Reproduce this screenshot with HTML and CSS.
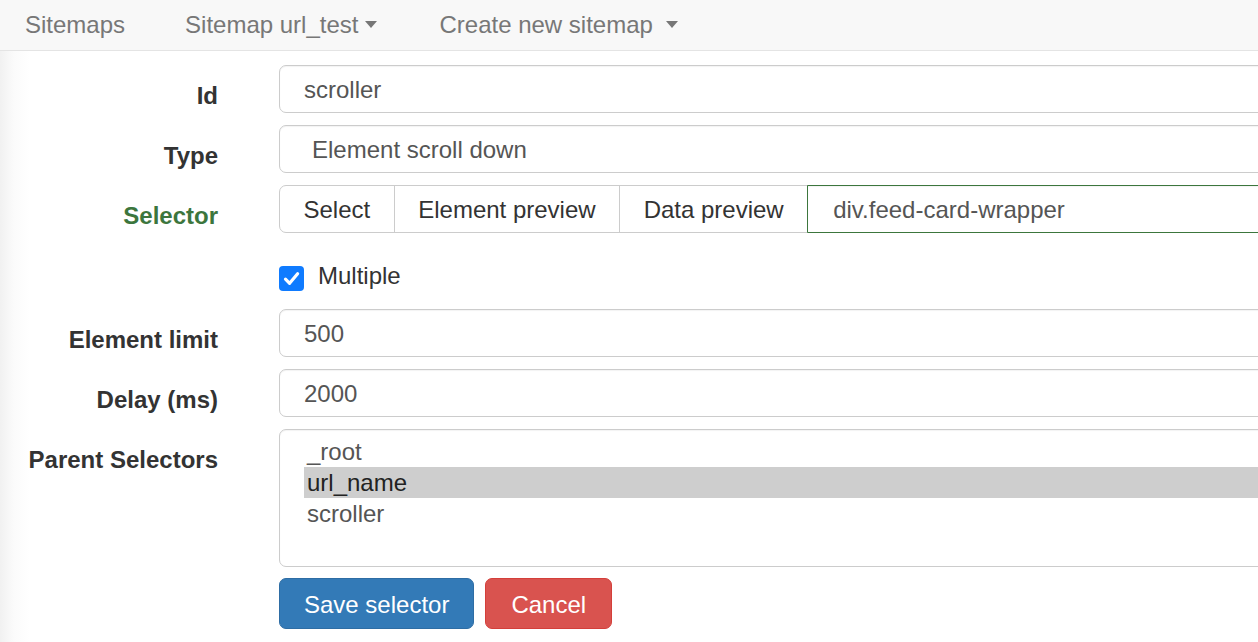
FILE: index.html
```html
<!DOCTYPE html>
<html>
<head>
<meta charset="utf-8">
<title>Edit selector</title>
<link rel="stylesheet" href="styles.css">
</head>
<body>
<nav class="navbar">
  <ul class="nav">
    <li class="nav-item">Sitemaps</li>
    <li class="nav-item">Sitemap url_test<span class="caret caret-tight"></span></li>
    <li class="nav-item nav-item-last">Create new sitemap<span class="caret caret-wide"></span></li>
  </ul>
</nav>
<main class="page">
  <form class="form">
    <div class="form-row">
      <label class="control-label">Id</label>
      <div class="control"><div class="form-control">scroller</div></div>
    </div>
    <div class="form-row">
      <label class="control-label">Type</label>
      <div class="control"><div class="form-control select-control">Element scroll down</div></div>
    </div>
    <div class="form-row">
      <label class="control-label label-success">Selector</label>
      <div class="control input-group">
        <span class="btn btn-default btn-first">Select</span>
        <span class="btn btn-default">Element preview</span>
        <span class="btn btn-default">Data preview</span>
        <div class="form-control group-input success">div.feed-card-wrapper</div>
      </div>
    </div>
    <div class="form-row checkbox-row">
      <span class="control-label"></span>
      <div class="control checkbox">
        <span class="check-box"><svg width="25" height="25" viewBox="0 0 25 25"><rect x="0" y="0" width="25" height="25" rx="4" fill="#0f7bff"/><path d="M6.5 13.2 L10.6 17.3 L18.6 7.8" fill="none" stroke="#fff" stroke-width="3.2" stroke-linecap="round" stroke-linejoin="round"/></svg></span>
        <span class="check-text">Multiple</span>
      </div>
    </div>
    <div class="form-row">
      <label class="control-label">Element limit</label>
      <div class="control"><div class="form-control">500</div></div>
    </div>
    <div class="form-row">
      <label class="control-label">Delay (ms)</label>
      <div class="control"><div class="form-control">2000</div></div>
    </div>
    <div class="form-row">
      <label class="control-label">Parent Selectors</label>
      <div class="control">
        <div class="listbox">
          <div class="option">_root</div>
          <div class="option selected">url_name</div>
          <div class="option">scroller</div>
        </div>
      </div>
    </div>
    <div class="form-row actions">
      <span class="control-label"></span>
      <div class="control buttons">
        <span class="btn btn-primary">Save selector</span>
        <span class="btn btn-danger">Cancel</span>
      </div>
    </div>
  </form>
</main>
</body>
</html>
```

FILE: styles.css
```css
html, body {
  margin: 0;
  padding: 0;
  overflow: hidden;
  background: #fff;
}
body {
  font-family: "Liberation Sans", Arial, Helvetica, sans-serif;
  font-size: 24px;
  line-height: 1.42857;
  color: #333;
  width: 1258px;
  height: 642px;
}
.navbar {
  height: 50px;
  background: #f8f8f8;
  border-bottom: 1px solid #e4e4e4;
}
.nav {
  list-style: none;
  margin: 0;
  padding: 0 0 0 25px;
  display: flex;
  gap: 60px;
}
.nav-item {
  line-height: 50px;
  color: #777;
  white-space: nowrap;
}
.nav-item-last { margin-left: 2px; }
.caret {
  display: inline-block;
  width: 0;
  height: 0;
  border-top: 7px solid #777;
  border-left: 6.5px solid transparent;
  border-right: 6.5px solid transparent;
  vertical-align: middle;
  position: relative;
  top: -2px;
}
.caret-tight { margin-left: 7px; }
.caret-wide { margin-left: 13px; }

.page {
  background: linear-gradient(to right, #f1f1f1 0, #fbfbfb 14px, #fff 30px);
  height: 591px;
  padding-top: 14px;
  box-sizing: border-box;
}
.form {
  width: 1500px;
}
.form-row {
  display: grid;
  grid-template-columns: 218px 1fr;
  column-gap: 61px;
  margin-bottom: 12px;
}
.control-label {
  text-align: right;
  font-weight: bold;
  padding-top: 14px;
  line-height: 34px;
  white-space: nowrap;
}
.label-success { color: #3c763d; }
.form-control {
  height: 48px;
  box-sizing: border-box;
  padding: 7px 24px 5px;
  border: 1px solid #ccc;
  border-radius: 7px;
  color: #555;
  background: #fff;
  white-space: nowrap;
  box-shadow: inset 0 1px 1px rgba(0,0,0,0.05);
}
.select-control { padding-left: 32px; }
.input-group {
  display: flex;
}
.btn {
  display: inline-block;
  box-sizing: border-box;
  border: 1px solid #ccc;
  padding: 7px 23.5px 5px;
  line-height: 34px;
  white-space: nowrap;
  background: #fff;
  color: #333;
}
.input-group .btn {
  height: 48px;
  margin-left: -1px;
}
.input-group .btn-first {
  margin-left: 0;
  border-radius: 7px 0 0 7px;
}
.group-input {
  flex: 1;
  margin-left: -1px;
  border-radius: 0 7px 7px 0;
}
.group-input.success {
  border-color: #3c763d;
  padding-left: 25px;
}
.checkbox-row {
  margin-bottom: 12px;
  height: 52px;
}
.checkbox {
  display: flex;
  align-items: flex-start;
  padding-top: 14px;
}
.check-box {
  width: 25px;
  height: 25px;
  margin-top: 7px;
  margin-right: 14px;
  display: block;
}
.check-box svg { display: block; }
.check-text { color: #333; }

.listbox {
  height: 138px;
  box-sizing: border-box;
  border: 1px solid #ccc;
  border-radius: 7px;
  padding: 6px 0 0 24px;
  box-shadow: inset 0 1px 1px rgba(0,0,0,0.05);
}
.option {
  line-height: 31px;
  height: 31px;
  padding-left: 3px;
  color: #555;
}
.option.selected {
  background: #cecece;
  color: #222;
}
.actions { margin-top: -1px; }
.buttons {
  display: flex;
  gap: 10px;
}
.buttons .btn {
  padding: 8px 24px 6px;
  line-height: 35px;
  border-radius: 7px;
  color: #fff;
}
.buttons .btn-danger { padding-left: 25px; padding-right: 25px; margin-left: 1px; }
.btn-primary {
  background: #337ab7;
  border-color: #2e6da4;
}
.btn-danger {
  background: #d9534f;
  border-color: #d43f3a;
}
```
